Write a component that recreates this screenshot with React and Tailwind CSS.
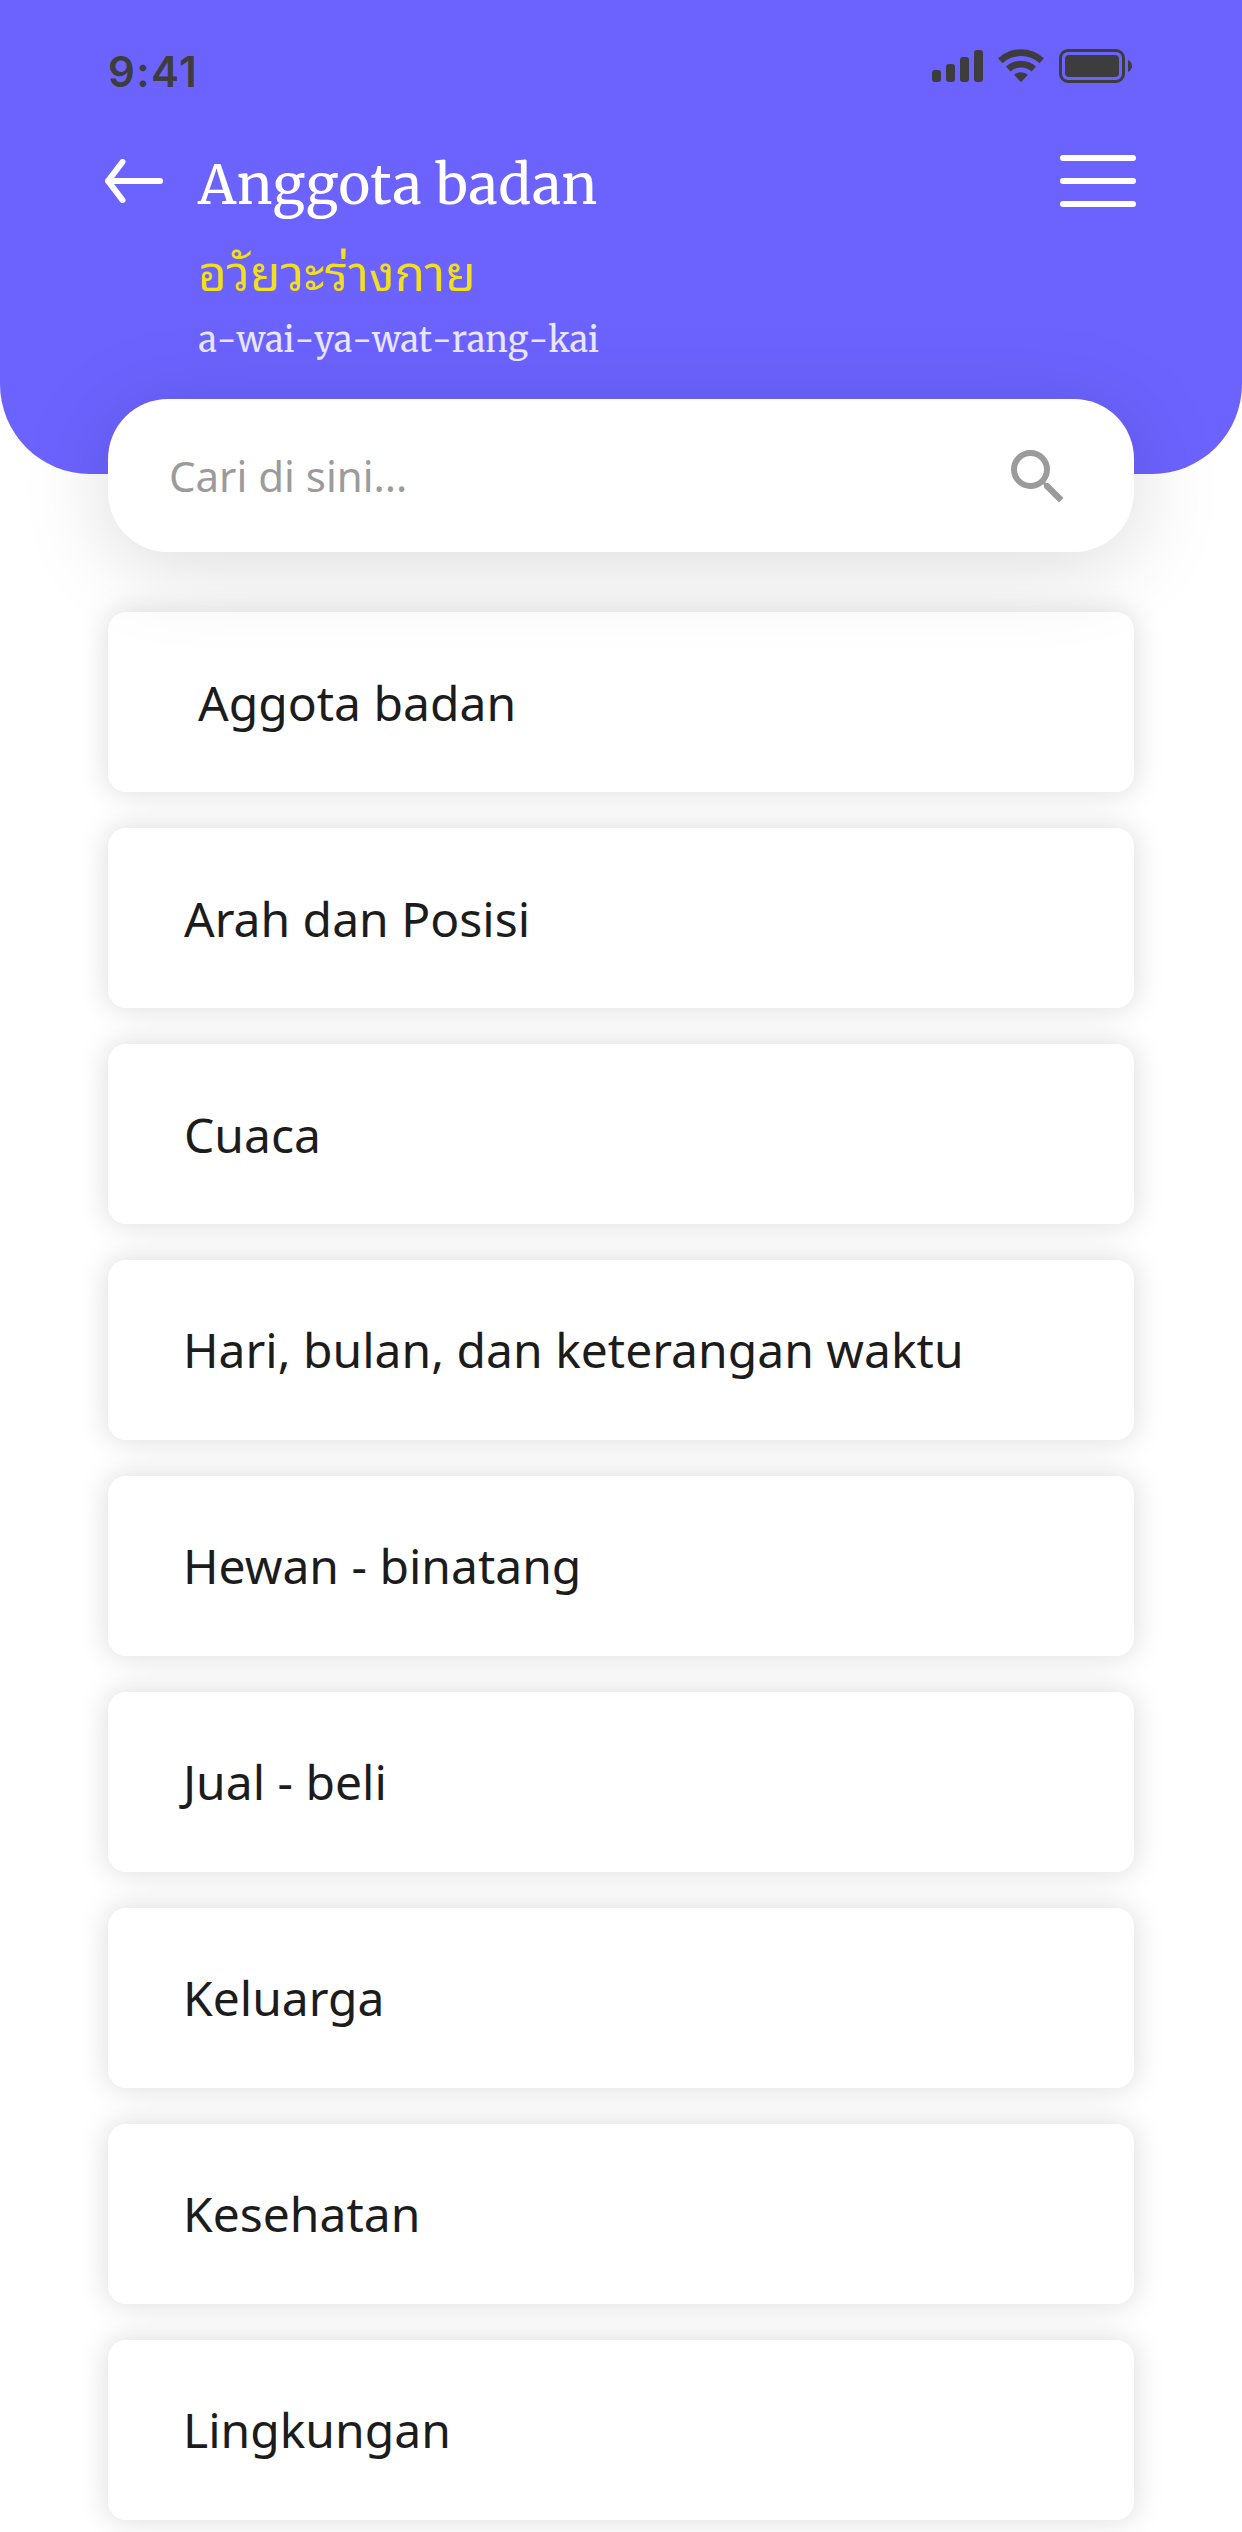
const categories = [
  { name: "Aggota badan", inset: "pt-px pl-[90px]" },
  { name: "Arah dan Posisi", inset: "pt-px pl-[76px]" },
  { name: "Cuaca", inset: "pt-px pl-[76px]" },
  { name: "Hari, bulan, dan keterangan waktu", inset: "pl-[75px]" },
  { name: "Hewan - binatang", inset: "pl-[75px]" },
  { name: "Jual - beli", inset: "pl-[75px]" },
  { name: "Keluarga", inset: "pl-[75px]" },
  { name: "Kesehatan", inset: "pl-[75px]" },
  { name: "Lingkungan", inset: "pl-[75px]" },
];

function StatusIcons() {
  return (
    <svg width="202" height="36" viewBox="0 0 202 36" className="mt-12 text-[#3d3d3d]" fill="currentColor">
      <rect x="0" y="22" width="9" height="12" rx="3" />
      <rect x="14" y="16" width="9" height="18" rx="3" />
      <rect x="28" y="9" width="9" height="25" rx="3" />
      <rect x="42" y="2" width="9" height="32" rx="3" />
      <path d="M66 10.3a33.5 33.5 0 0 1 46 0l-4.500 5a27 27 0 0 0-37 0z" />
      <path d="M74 18.600a22 22 0 0 1 30 0l-4.500 5a15.500 15.500 0 0 0-21 0z" />
      <path d="M82 26.800a11 11 0 0 1 14 0l-6.300 6.700a1 1 0 0 1-1.400 0z" />
      <rect x="128.5" y="2.5" width="63" height="31" rx="7.5" fill="none" stroke="currentColor" strokeWidth="3" />
      <rect x="133" y="7" width="54" height="22" rx="4" />
      <path d="M196 12c2.6 1.2 4 3.400 4 6s-1.400 4.800-4 6z" />
    </svg>
  );
}

function Header() {
  return (
    <header className="h-[474px] rounded-b-[90px] bg-[#6c63ff] px-[105px]">
      <div className="flex h-[120px] items-start justify-between">
        <span className="mt-[46px] ml-[3px] font-['Inter',sans-serif] text-[42px] leading-[52px] font-semibold tracking-[1.4px] text-[#3d3d3d]">
          9:41
        </span>
        <div className="mr-[3px]">
          <StatusIcons />
        </div>
      </div>
      <div className="flex items-start">
        <svg width="58" height="44" viewBox="0 0 58 44" className="mt-[39px]" fill="none" stroke="white" strokeWidth="6" strokeLinecap="round" strokeLinejoin="round">
          <path d="M55 22H3M17.500 3L3 22L17.500 41" />
        </svg>
        <div className="ml-[35px] flex-1 whitespace-nowrap">
          <h1 className="mt-[29px] h-[72px] font-['Merriweather',serif] text-[54px] leading-[72px] tracking-[0.54px] text-white">
            Anggota badan
          </h1>
          <p className="mt-[18px] h-[60px] font-['Noto_Sans_Thai_Looped','Noto_Sans',sans-serif] text-[49.5px] leading-[60px] text-[#f2df1d]">
            อวัยวะร่างกาย
          </p>
          <p className="mt-[17px] ml-[0.5px] h-[48px] font-['Merriweather',serif] text-[34px] leading-[48px] text-white/85 [font-kerning:none]">
            a-wai-ya-wat-rang-kai
          </p>
        </div>
        <button aria-label="Menu" className="mt-[35px] mr-px flex w-[76px] flex-col gap-[17px]">
          <span className="h-1.5 rounded-full bg-white" />
          <span className="h-1.5 rounded-full bg-white" />
          <span className="h-1.5 rounded-full bg-white" />
        </button>
      </div>
    </header>
  );
}

function SearchBar() {
  return (
    <div className="relative z-10 mx-[108px] -mt-[75px] flex h-[153px] items-center justify-between rounded-[60px] bg-white px-[60px] shadow-[0_12px_90px_rgba(0,0,0,0.15)]">
      <span className="ml-px font-['Noto_Sans',sans-serif] text-[42px] leading-[60px] text-[#9b9b9b]">Cari di sini...</span>
      <svg width="72" height="72" viewBox="0 0 24 24" fill="#9b9b9b" className="mt-[3px]">
        <path d="M15.5 14h-.79l-.28-.27A6.471 6.471 0 0 0 16 9.5 6.5 6.5 0 1 0 9.5 16c1.610 0 3.090-.59 4.230-1.570l.27.28v.79l5 4.990L20.490 19l-4.990-5zm-6 0C7.010 14 5 11.990 5 9.500S7.010 5 9.500 5 14 7.010 14 9.500 11.990 14 9.500 14z" />
      </svg>
    </div>
  );
}

export default function App() {
  return (
    <div className="h-[2532px] w-[1242px] overflow-hidden bg-white">
      <Header />
      <SearchBar />
      <ul className="mx-[108px] mt-[60px] flex flex-col gap-9">
        {categories.map(({ name, inset }) => (
          <li
            key={name}
            className={`flex h-[180px] shrink-0 items-center rounded-[18px] bg-white font-['Noto_Sans',sans-serif] text-[48px] leading-[66px] text-[#1c1c1c] shadow-[0_0_30px_rgba(0,0,0,0.15)] ${inset}`}
          >
            {name}
          </li>
        ))}
      </ul>
    </div>
  );
}
